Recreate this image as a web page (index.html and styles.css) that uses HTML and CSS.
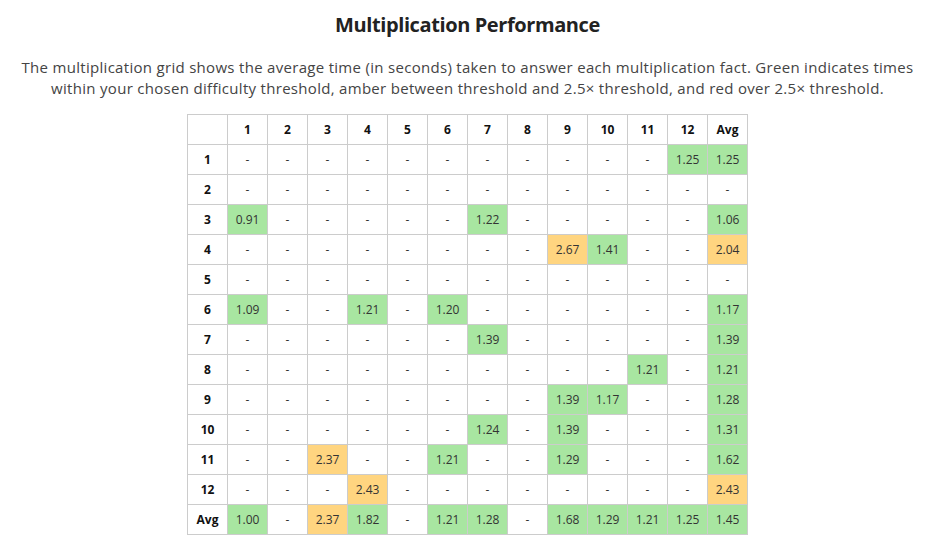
FILE: index.html
```html
<!DOCTYPE html>
<html lang="en">
<head>
<meta charset="utf-8">
<title>Multiplication Performance</title>
<link rel="stylesheet" href="styles.css">
</head>
<body>
<main class="page">
  <h1 class="title">Multiplication Performance</h1>
  <p class="intro">The multiplication grid shows the average time (in seconds) taken to answer each multiplication fact. Green indicates times within your chosen difficulty threshold, amber between threshold and 2.5× threshold, and red over 2.5× threshold.</p>
  <table class="grid">
    <thead>
      <tr><th></th><th>1</th><th>2</th><th>3</th><th>4</th><th>5</th><th>6</th><th>7</th><th>8</th><th>9</th><th>10</th><th>11</th><th>12</th><th>Avg</th></tr>
    </thead>
    <tbody>
      <tr><th>1</th><td>-</td><td>-</td><td>-</td><td>-</td><td>-</td><td>-</td><td>-</td><td>-</td><td>-</td><td>-</td><td>-</td><td class="g">1.25</td><td class="g">1.25</td></tr>
      <tr><th>2</th><td>-</td><td>-</td><td>-</td><td>-</td><td>-</td><td>-</td><td>-</td><td>-</td><td>-</td><td>-</td><td>-</td><td>-</td><td>-</td></tr>
      <tr><th>3</th><td class="g">0.91</td><td>-</td><td>-</td><td>-</td><td>-</td><td>-</td><td class="g">1.22</td><td>-</td><td>-</td><td>-</td><td>-</td><td>-</td><td class="g">1.06</td></tr>
      <tr><th>4</th><td>-</td><td>-</td><td>-</td><td>-</td><td>-</td><td>-</td><td>-</td><td>-</td><td class="a">2.67</td><td class="g">1.41</td><td>-</td><td>-</td><td class="a">2.04</td></tr>
      <tr><th>5</th><td>-</td><td>-</td><td>-</td><td>-</td><td>-</td><td>-</td><td>-</td><td>-</td><td>-</td><td>-</td><td>-</td><td>-</td><td>-</td></tr>
      <tr><th>6</th><td class="g">1.09</td><td>-</td><td>-</td><td class="g">1.21</td><td>-</td><td class="g">1.20</td><td>-</td><td>-</td><td>-</td><td>-</td><td>-</td><td>-</td><td class="g">1.17</td></tr>
      <tr><th>7</th><td>-</td><td>-</td><td>-</td><td>-</td><td>-</td><td>-</td><td class="g">1.39</td><td>-</td><td>-</td><td>-</td><td>-</td><td>-</td><td class="g">1.39</td></tr>
      <tr><th>8</th><td>-</td><td>-</td><td>-</td><td>-</td><td>-</td><td>-</td><td>-</td><td>-</td><td>-</td><td>-</td><td class="g">1.21</td><td>-</td><td class="g">1.21</td></tr>
      <tr><th>9</th><td>-</td><td>-</td><td>-</td><td>-</td><td>-</td><td>-</td><td>-</td><td>-</td><td class="g">1.39</td><td class="g">1.17</td><td>-</td><td>-</td><td class="g">1.28</td></tr>
      <tr><th>10</th><td>-</td><td>-</td><td>-</td><td>-</td><td>-</td><td>-</td><td class="g">1.24</td><td>-</td><td class="g">1.39</td><td>-</td><td>-</td><td>-</td><td class="g">1.31</td></tr>
      <tr><th>11</th><td>-</td><td>-</td><td class="a">2.37</td><td>-</td><td>-</td><td class="g">1.21</td><td>-</td><td>-</td><td class="g">1.29</td><td>-</td><td>-</td><td>-</td><td class="g">1.62</td></tr>
      <tr><th>12</th><td>-</td><td>-</td><td>-</td><td class="a">2.43</td><td>-</td><td>-</td><td>-</td><td>-</td><td>-</td><td>-</td><td>-</td><td>-</td><td class="a">2.43</td></tr>
      <tr><th>Avg</th><td class="g">1.00</td><td>-</td><td class="a">2.37</td><td class="g">1.82</td><td>-</td><td class="g">1.21</td><td class="g">1.28</td><td>-</td><td class="g">1.68</td><td class="g">1.29</td><td class="g">1.21</td><td class="g">1.25</td><td class="g">1.45</td></tr>
    </tbody>
  </table>
</main>
</body>
</html>
```

FILE: styles.css
```css
html, body {
  margin: 0;
  padding: 0;
  background: #ffffff;
}

body {
  font-family: "Open Sans", "Noto Sans", sans-serif;
  color: #333333;
}

.page {
  display: flex;
  flex-direction: column;
  align-items: center;
  padding: 13px 6px 0 0;
}

.title {
  margin: 0;
  font-size: 20px;
  line-height: 24px;
  font-weight: 700;
  letter-spacing: -0.4px;
  color: #222222;
}

.intro {
  margin: 20px 0 0;
  padding: 0 10px;
  font-size: 15px;
  line-height: 21px;
  letter-spacing: 0.3px;
  color: #444444;
  text-align: center;
}

.grid {
  margin-top: 15px;
  border-collapse: collapse;
  table-layout: fixed;
  width: 561px;
  background: #ffffff;
}

.grid th,
.grid td {
  height: 29px;
  padding: 0;
  border: 1px solid #cccccc;
  text-align: center;
  vertical-align: middle;
  font-size: 12px;
}

.grid th {
  font-weight: 700;
  color: #111111;
}

.grid td {
  color: #333333;
}

.grid td.g {
  background: #a8e6a1;
}

.grid td.a {
  background: #ffd580;
}
```
